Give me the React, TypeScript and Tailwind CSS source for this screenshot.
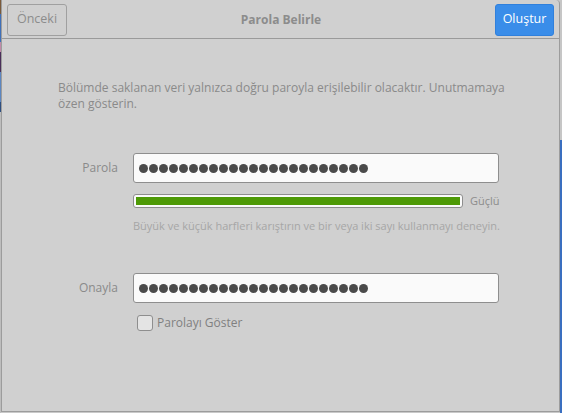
import React from "react";

const Dots = () => (
  <div className="flex gap-[1px] items-center">
    {Array.from({ length: 23 }).map((_, i) => (
      <span key={i} className="block w-[9px] h-[9px] rounded-full bg-[#4a4a4a]" />
    ))}
  </div>
);

export default function App() {
  return (
    <div
      className="w-[562px] h-[413px] flex bg-[#c9c9c9] overflow-hidden"
      style={{ fontFamily: '"Open Sans", "Noto Sans", sans-serif' }}
    >
      <div className="w-[1px] flex flex-col">
        <div className="h-[14px] bg-[#7a5a3a]" />
        <div className="h-[28px] bg-[#3f6fb8]" />
        <div className="h-[10px] bg-[#c08aa8]" />
        <div className="h-[20px] bg-[#4a2f5a]" />
        <div className="h-[30px] bg-[#5c86c0]" />
        <div className="h-[10px] bg-[#2f4f80]" />
        <div className="flex-1 bg-[#bdbdbd]" />
      </div>
      <div className="w-[559px] h-[412px] bg-[#d0d0d0] border-x border-b border-[#9c9c9c] rounded-tr-[4px] flex flex-col">
        <div className="h-[39px] border-b border-[#9a9a9a] flex items-center justify-between px-[5px] pt-[1px]">
          <button className="w-[60px] h-[32px] rounded-[3px] border border-[#a0a0a0] text-[12.5px] text-[#8c8c8c] flex items-center justify-center">
            Önceki
          </button>
          <div className="text-[12px] font-bold text-[#8c8c8c]">Parola Belirle</div>
          <button className="w-[59px] h-[32px] rounded-[3px] bg-[#3a8de9] border border-[#3080dc] text-[12.5px] text-white flex items-center justify-center">
            Oluştur
          </button>
        </div>
        <div className="flex flex-col pl-[56px] pt-[41px]">
          <p className="text-[12px] leading-[16px] text-[#8a8a8a]">
            Bölümde saklanan veri yalnızca doğru paroyla erişilebilir olacaktır. Unutmamaya
            <br />
            özen gösterin.
          </p>
          <div className="flex items-center mt-[41px] gap-[15px]">
            <div className="w-[60px] text-right text-[12px] text-[#8a8a8a]">Parola</div>
            <div className="w-[366px] h-[30px] rounded-[3px] border border-[#8e8e8e] bg-[#fafafa] flex items-center pl-[5px]">
              <Dots />
            </div>
          </div>
          <div className="flex items-center ml-[75px] mt-[10px] gap-[7px]">
            <div className="w-[330px] h-[14px] rounded-[3px] border border-[#8e8e8e] bg-[#fafafa] p-[2px]">
              <div className="w-full h-full bg-[#4e9a06]" />
            </div>
            <span className="text-[11px] text-[#8c8c8c]">Güçlü</span>
          </div>
          <div className="ml-[75px] mt-[8px] text-[11px] text-[#a6a6a6]">
            Büyük ve küçük harfleri karıştırın ve bir veya iki sayı kullanmayı deneyin.
          </div>
          <div className="flex items-center mt-[39px] gap-[15px]">
            <div className="w-[60px] text-right text-[12px] text-[#8a8a8a]">Onayla</div>
            <div className="w-[366px] h-[30px] rounded-[3px] border border-[#8e8e8e] bg-[#fafafa] flex items-center pl-[5px]">
              <Dots />
            </div>
          </div>
          <label className="flex items-center ml-[79px] mt-[11px] gap-[4px]">
            <span className="block w-[16px] h-[16px] rounded-[3px] border border-[#8e8e8e] bg-[#e4e4e4]" />
            <span className="text-[12px] text-[#808080]">Parolayı Göster</span>
          </label>
        </div>
      </div>
      <div className="flex-1 flex flex-col">
        <div className="h-[140px] bg-[#c6c6c6]" />
        <div className="flex-1 bg-[#3a6fc0]" />
      </div>
    </div>
  );
}
